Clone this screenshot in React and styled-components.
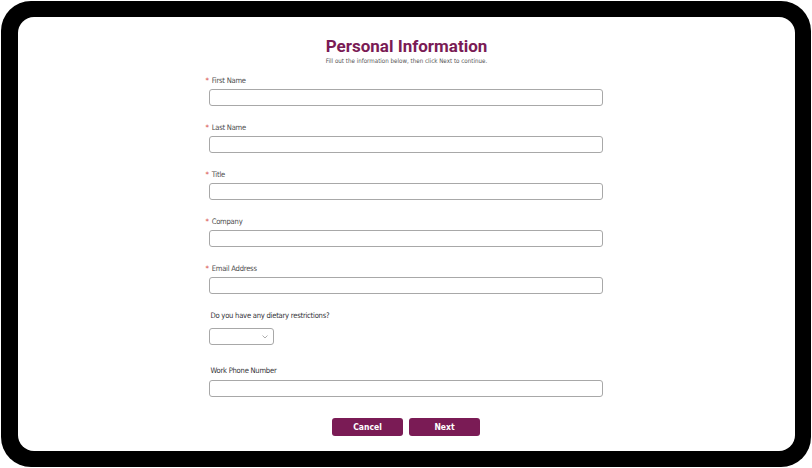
import React from 'react';
import styled, { createGlobalStyle } from 'styled-components';

const GlobalStyle = createGlobalStyle`
  html, body {
    margin: 0;
    padding: 0;
    background: #ffffff;
  }
  * { box-sizing: border-box; }
`;

const Page = styled.div`
  width: 812px;
  height: 468px;
  padding: 1px;
  background: #ffffff;
`;

const Device = styled.div`
  height: 466px;
  background: #000;
  border-radius: 30px;
  padding: 16px 16px 16px 17px;
`;

const Screen = styled.div`
  height: 100%;
  background: #fff;
  border-radius: 16px;
  display: flex;
  flex-direction: column;
  align-items: center;
  padding-top: 18px;
`;

const Title = styled.h1`
  margin: 0;
  font-family: Roboto, "Liberation Sans", sans-serif;
  font-weight: 700;
  font-size: 17px;
  line-height: 22px;
  color: #7a1b55;
`;

const Subtitle = styled.p`
  margin: 0;
  font-family: "Liberation Sans Narrow", "DejaVu Sans Condensed", sans-serif;
  font-size: 6.2px;
  line-height: 8px;
  color: #555;
`;

const Form = styled.div`
  width: 398px;
  margin-top: 11px;
  margin-right: 4px;
  display: flex;
  flex-direction: column;
  gap: 17px;
`;

const Field = styled.div`
  display: flex;
  flex-direction: column;
  margin-top: ${p => p.extraTop || 0}px;
`;

const Label = styled.label`
  font-family: "Liberation Sans Narrow", "DejaVu Sans Condensed", sans-serif;
  font-size: 7.6px;
  letter-spacing: -0.25px;
  line-height: 10px;
  font-weight: 500;
  color: ${p => (p.dark ? '#333338' : '#4d4d4d')};
  padding-left: ${p => (p.required ? '0' : '5px')};
  margin-bottom: ${p => p.below || 3}px;
`;

const Star = styled.span`
  color: #d9534f;
  margin-right: 3px;
`;

const Input = styled.input`
  margin-left: 3px;
  width: 394px;
  height: 17px;
  border: 1px solid #a8a8a8;
  border-radius: 3px;
  background: #fff;
  padding: 0 4px;
`;

const SelectBox = styled.div`
  margin-left: 3px;
  width: 65px;
  height: 17px;
  border: 1px solid #a8a8a8;
  border-radius: 3px;
  background: #fff;
  display: flex;
  align-items: center;
  justify-content: flex-end;
  padding-right: 5px;
`;

const Buttons = styled.div`
  display: flex;
  justify-content: center;
  gap: 6px;
  margin-top: 4px;
  padding-left: 3px;
`;

const Button = styled.button`
  width: 71px;
  height: 18px;
  background: #7a1b55;
  color: #fff;
  border: none;
  border-radius: 3px;
  font-family: "Liberation Sans Narrow", "DejaVu Sans Condensed", sans-serif;
  font-weight: 700;
  font-size: 8.5px;
  cursor: pointer;
`;

const fields = ['First Name', 'Last Name', 'Title', 'Company', 'Email Address'];

export default function App() {
  return (
    <Page>
      <GlobalStyle />
      <Device>
        <Screen>
          <Title>Personal Information</Title>
          <Subtitle>Fill out the information below, then click Next to continue.</Subtitle>
          <Form>
            {fields.map(f => (
              <Field key={f}>
                <Label required><Star>*</Star>{f}</Label>
                <Input type="text" />
              </Field>
            ))}
            <Field>
              <Label dark below={7}>Do you have any dietary restrictions?</Label>
              <SelectBox>
                <svg width="6" height="4" viewBox="0 0 6 4">
                  <path d="M0.5 0.5 L3 3 L5.5 0.5" fill="none" stroke="#999" strokeWidth="0.8" />
                </svg>
              </SelectBox>
            </Field>
            <Field extraTop={4}>
              <Label dark below={4}>Work Phone Number</Label>
              <Input type="text" />
            </Field>
            <Buttons>
              <Button>Cancel</Button>
              <Button>Next</Button>
            </Buttons>
          </Form>
        </Screen>
      </Device>
    </Page>
  );
}
